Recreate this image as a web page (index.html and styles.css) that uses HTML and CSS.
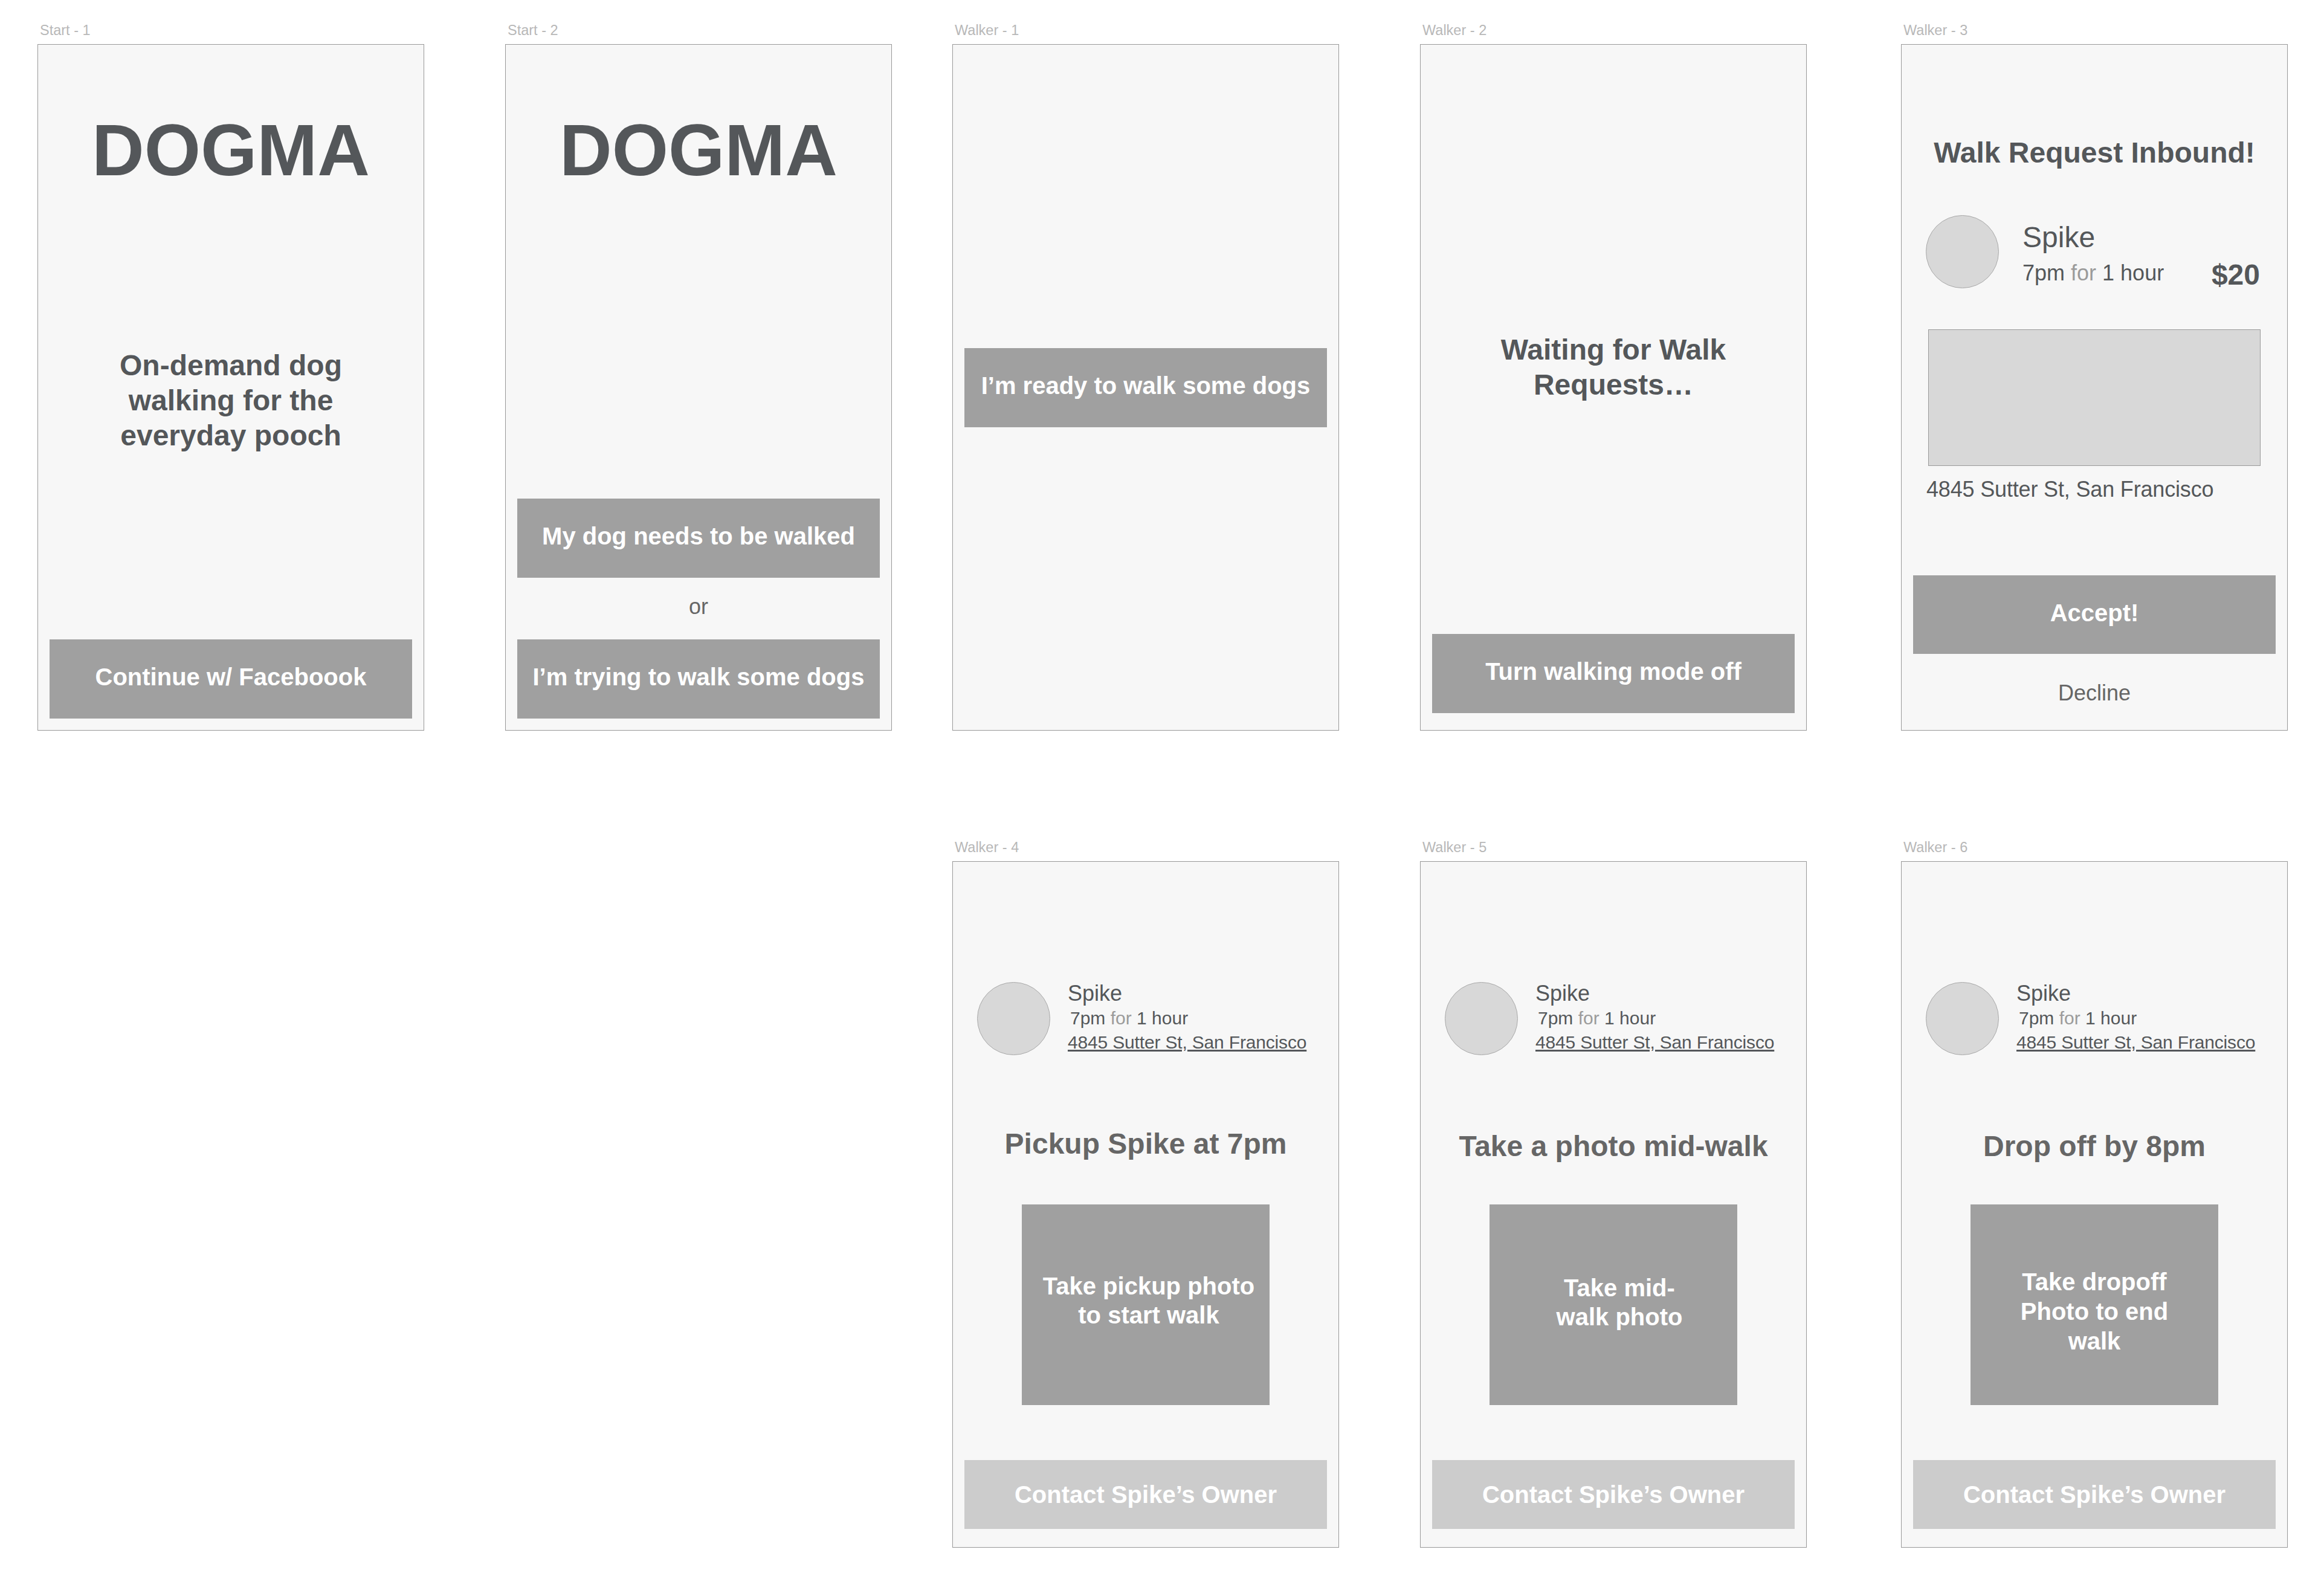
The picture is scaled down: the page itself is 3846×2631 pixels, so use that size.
FILE: index.html
```html
<!DOCTYPE html>
<html>

<head>
    <title>Dogma wireframes</title>
    <meta charset="utf-8">
    <link rel="stylesheet" href="styles.css">
</head>

<body>
    <div class="canvas">
        <section class="screen col-a">
            <div class="label">Start - 1</div>
            <div class="board">
                <h1 class="logo">DOGMA</h1>
                <p class="heading tagline">On-demand dog<br>walking for the<br>everyday pooch</p>
                <div class="btn btn-bottom btn-last">Continue w/ Faceboook</div>
            </div>
        </section>

        <section class="screen col-b">
            <div class="label">Start - 2</div>
            <div class="board">
                <h1 class="logo">DOGMA</h1>
                <div class="btn btn-bottom">My dog needs to be walked</div>
                <div class="or">or</div>
                <div class="btn btn-last">I’m trying to walk some dogs</div>
            </div>
        </section>

        <section class="screen col-c">
            <div class="label">Walker - 1</div>
            <div class="board">
                <div class="btn btn-ready">I’m ready to walk some dogs</div>
            </div>
        </section>

        <section class="screen col-d">
            <div class="label">Walker - 2</div>
            <div class="board">
                <p class="heading waiting">Waiting for Walk<br>Requests…</p>
                <div class="btn btn-off">Turn walking mode off</div>
            </div>
        </section>

        <section class="screen col-e">
            <div class="label">Walker - 3</div>
            <div class="board">
                <p class="heading inbound">Walk Request Inbound!</p>
                <div class="request">
                    <div class="avatar"></div>
                    <div class="request-info">
                        <div class="name-lg">Spike</div>
                        <div class="time-lg">7pm <span class="muted">for</span> 1 hour</div>
                    </div>
                    <div class="price">$20</div>
                </div>
                <div class="map"></div>
                <div class="address-lg">4845 Sutter St, San Francisco</div>
                <div class="btn btn-accept">Accept!</div>
                <div class="decline">Decline</div>
            </div>
        </section>

        <section class="screen col-c row-two">
            <div class="label">Walker - 4</div>
            <div class="board">
                <div class="dog">
                    <div class="avatar"></div>
                    <div class="dog-info">
                        <div class="name">Spike</div>
                        <div class="time">7pm <span class="muted">for</span> 1 hour</div>
                        <div class="address">4845 Sutter St, San Francisco</div>
                    </div>
                </div>
                <p class="heading step step-first">Pickup Spike at 7pm</p>
                <div class="photo-btn photo-first">Take pickup photo<br>to start walk</div>
                <div class="btn btn-contact">Contact Spike’s Owner</div>
            </div>
        </section>

        <section class="screen col-d row-two">
            <div class="label">Walker - 5</div>
            <div class="board">
                <div class="dog">
                    <div class="avatar"></div>
                    <div class="dog-info">
                        <div class="name">Spike</div>
                        <div class="time">7pm <span class="muted">for</span> 1 hour</div>
                        <div class="address">4845 Sutter St, San Francisco</div>
                    </div>
                </div>
                <p class="heading step">Take a photo mid-walk</p>
                <div class="photo-btn photo-mid">Take mid-<br>walk photo</div>
                <div class="btn btn-contact">Contact Spike’s Owner</div>
            </div>
        </section>

        <section class="screen col-e row-two">
            <div class="label">Walker - 6</div>
            <div class="board">
                <div class="dog">
                    <div class="avatar"></div>
                    <div class="dog-info">
                        <div class="name">Spike</div>
                        <div class="time">7pm <span class="muted">for</span> 1 hour</div>
                        <div class="address">4845 Sutter St, San Francisco</div>
                    </div>
                </div>
                <p class="heading step">Drop off by 8pm</p>
                <div class="photo-btn photo-last">Take dropoff<br>Photo to end<br>walk</div>
                <div class="btn btn-contact">Contact Spike’s Owner</div>
            </div>
        </section>
    </div>
</body>

</html>
```

FILE: styles.css
```css
body {
    margin: 0;
    background-color: #fff;
    font-family: "Liberation Sans", Arial, sans-serif;
    color: #54575a;
}

.canvas {
    display: grid;
    width: 3846px;
    height: 2631px;
    grid-template-columns: 62px 640px 134px 640px 100px 640px 134px 640px 156px 640px 60px;
    grid-template-rows: 1209px 1352px;
    align-items: end;
}

.col-a { grid-column: 2; }
.col-b { grid-column: 4; }
.col-c { grid-column: 6; }
.col-d { grid-column: 8; }
.col-e { grid-column: 10; }

.screen { grid-row: 1; }
.row-two { grid-row: 2; }

.label {
    height: 37px;
    padding-left: 4px;
    font-size: 23.5px;
    line-height: 28px;
    color: #b8b8b8;
}

.board {
    display: flex;
    flex-direction: column;
    box-sizing: border-box;
    height: 1136px;
    padding: 0 19px;
    border: 1px solid #999;
    background-color: #f7f7f7;
    text-align: center;
}

.logo {
    margin: 105px 0 0;
    font-size: 120px;
    line-height: 138px;
    font-weight: bold;
}

.heading {
    margin: 0;
    font-size: 48px;
    line-height: 58px;
    font-weight: bold;
}

.tagline { margin-top: 259px; }
.waiting { margin-top: 476px; }
.inbound { margin-top: 150px; }

.btn {
    display: flex;
    flex: none;
    align-items: center;
    justify-content: center;
    height: 131px;
    padding-bottom: 6px;
    box-sizing: border-box;
    background-color: #a0a0a0;
    font-size: 40px;
    font-weight: bold;
    color: #fff;
}

.btn-bottom { margin-top: auto; }
.btn-last { margin-bottom: 19px; }
.btn-ready { margin-top: 502px; }
.btn-off { margin-top: auto; margin-bottom: 28px; }

.or {
    height: 102px;
    font-size: 36px;
    line-height: 96px;
    color: #666;
}

/* walker 3 */
.request {
    display: flex;
    align-items: flex-start;
    height: 121px;
    margin: 74px 0 0 21px;
}

.avatar {
    flex: none;
    box-sizing: border-box;
    width: 121px;
    height: 121px;
    border: 1px solid #a9a9a9;
    border-radius: 50%;
    background-color: #d8d8d8;
}

.request-info {
    margin-left: 39px;
    text-align: left;
}

.name-lg {
    font-size: 48px;
    line-height: 56px;
    margin-top: 9px;
}

.time-lg {
    font-size: 36px;
    line-height: 44px;
    margin-top: 9px;
}

.muted { color: #9b9b9b; }

.price {
    margin-left: auto;
    margin-top: 71px;
    margin-right: 26px;
    font-size: 48px;
    line-height: 56px;
    font-weight: bold;
}

.map {
    flex: none;
    box-sizing: border-box;
    height: 226px;
    margin: 68px 25px 0 25px;
    border: 1px solid #999;
    background-color: #d8d8d8;
}

.address-lg {
    margin: 18px 0 0 22px;
    font-size: 36px;
    line-height: 42px;
    letter-spacing: -0.17px;
    text-align: left;
}

.btn-accept {
    height: 130px;
    margin-top: 121px;
}

.decline {
    margin-top: 44px;
    font-size: 36px;
    line-height: 42px;
    color: #666;
}

/* walker 4 - 6 */
.dog {
    display: flex;
    flex: none;
    height: 121px;
    margin: 199px 0 0 21px;
}

.dog-info {
    margin-top: -2px;
    margin-left: 29px;
    text-align: left;
}

.name {
    font-size: 36px;
    line-height: 42px;
}

.time {
    padding-left: 4px;
    font-size: 30px;
    line-height: 40px;
}

.address {
    font-size: 30px;
    line-height: 40px;
    letter-spacing: -0.17px;
    text-decoration: underline;
}

.step {
    margin-top: 122px;
    color: #666;
}

.step-first { margin-top: 118px; }

.photo-btn {
    display: flex;
    flex: none;
    align-items: center;
    justify-content: center;
    box-sizing: border-box;
    align-self: center;
    width: 410px;
    height: 332px;
    margin-top: 67px;
    background-color: #a0a0a0;
    font-size: 40px;
    line-height: 48px;
    font-weight: bold;
    color: #fff;
}

.photo-first { margin-top: 71px; padding: 0 0 15px 10px; }
.photo-mid { padding: 0 0 8px 20px; }
.photo-last { padding-top: 23px; line-height: 49px; }

.btn-contact {
    height: 114px;
    margin-top: auto;
    margin-bottom: 30px;
    padding-bottom: 0;
    background-color: #ccc;
}
```
